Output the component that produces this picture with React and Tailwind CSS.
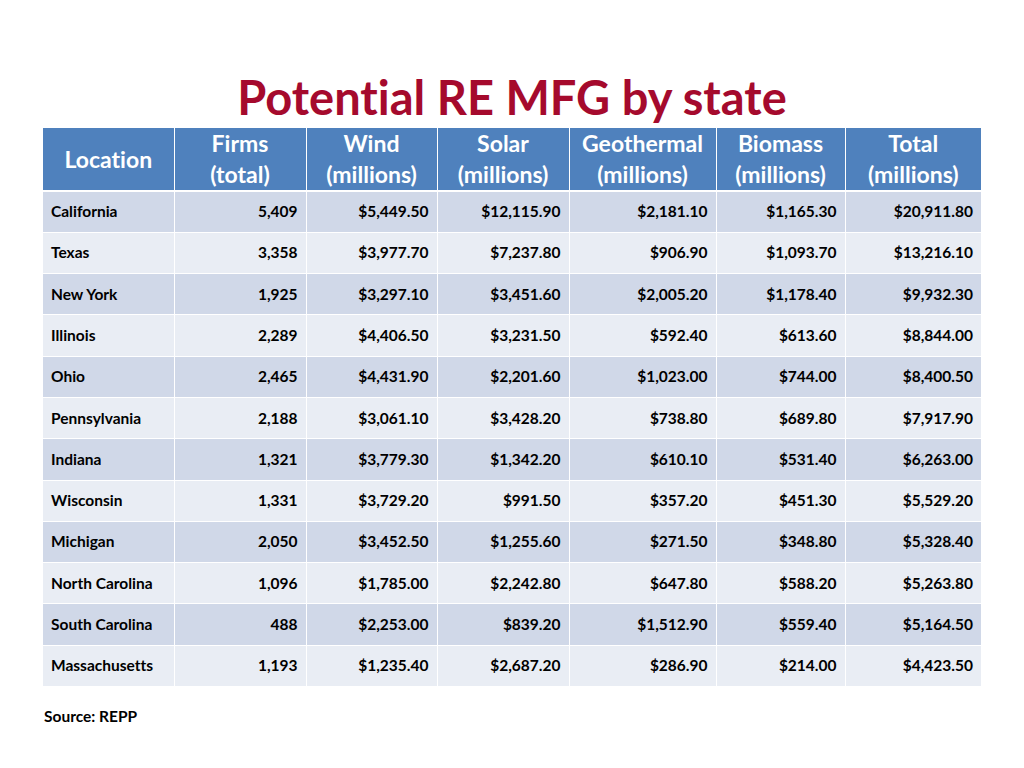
import React from "react";

const rows = [
  ["California", "5,409", "$5,449.50", "$12,115.90", "$2,181.10", "$1,165.30", "$20,911.80"],
  ["Texas", "3,358", "$3,977.70", "$7,237.80", "$906.90", "$1,093.70", "$13,216.10"],
  ["New York", "1,925", "$3,297.10", "$3,451.60", "$2,005.20", "$1,178.40", "$9,932.30"],
  ["Illinois", "2,289", "$4,406.50", "$3,231.50", "$592.40", "$613.60", "$8,844.00"],
  ["Ohio", "2,465", "$4,431.90", "$2,201.60", "$1,023.00", "$744.00", "$8,400.50"],
  ["Pennsylvania", "2,188", "$3,061.10", "$3,428.20", "$738.80", "$689.80", "$7,917.90"],
  ["Indiana", "1,321", "$3,779.30", "$1,342.20", "$610.10", "$531.40", "$6,263.00"],
  ["Wisconsin", "1,331", "$3,729.20", "$991.50", "$357.20", "$451.30", "$5,529.20"],
  ["Michigan", "2,050", "$3,452.50", "$1,255.60", "$271.50", "$348.80", "$5,328.40"],
  ["North Carolina", "1,096", "$1,785.00", "$2,242.80", "$647.80", "$588.20", "$5,263.80"],
  ["South Carolina", "488", "$2,253.00", "$839.20", "$1,512.90", "$559.40", "$5,164.50"],
  ["Massachusetts", "1,193", "$1,235.40", "$2,687.20", "$286.90", "$214.00", "$4,423.50"],
];

const headers = [
  ["Firms", "(total)"],
  ["Wind", "(millions)"],
  ["Solar", "(millions)"],
  ["Geothermal", "(millions)"],
  ["Biomass", "(millions)"],
  ["Total", "(millions)"],
];

const App = () => {
  return (
    <div className="w-[1024px] h-[768px] bg-white font-['Lato','Open_Sans',sans-serif] [font-variant-ligatures:none] overflow-hidden">
      <h1 className="pt-[71px] h-[128px] text-center text-[47px] leading-[52px] font-bold text-[#a50a2d]">
        Potential RE MFG by state
      </h1>

      <table className="ml-[43px] w-[938px] border-collapse table-fixed">
        <colgroup>
          <col className="w-[131px]" />
          <col className="w-[132px]" />
          <col className="w-[131px]" />
          <col className="w-[132px]" />
          <col className="w-[147px]" />
          <col className="w-[129px]" />
          <col className="w-[136px]" />
        </colgroup>
        <thead>
          <tr className="h-[61px] bg-[#4f81bd] text-white border-b-[2px] border-white">
            <th className="text-[23px] font-bold text-center border-r border-white">Location</th>
            {headers.map(([a, b], i) => (
              <th
                key={a}
                className={
                  "text-[23px] leading-[31px] font-bold text-center whitespace-nowrap " +
                  (i < headers.length - 1 ? "border-r border-white" : "")
                }
              >
                <div>{a}</div>
                <div>{b}</div>
              </th>
            ))}
          </tr>
        </thead>
        <tbody>
          {rows.map((r, i) => (
            <tr
              key={r[0]}
              className={
                "h-[41.3px] border-b border-white " +
                (i % 2 === 0 ? "bg-[#d0d8e8]" : "bg-[#e9edf4]")
              }
            >
              {r.map((c, j) => (
                <td
                  key={j}
                  className={
                    "text-[15.5px] font-bold text-black px-[8px] " +
                    (j === 0 ? "text-left " : "text-right ") +
                    (j < r.length - 1 ? "border-r border-white" : "")
                  }
                >
                  {c}
                </td>
              ))}
            </tr>
          ))}
        </tbody>
      </table>

      <p className="ml-[44px] mt-[18px] text-[15.5px] font-bold text-black">Source: REPP</p>
    </div>
  );
};

export default App;
